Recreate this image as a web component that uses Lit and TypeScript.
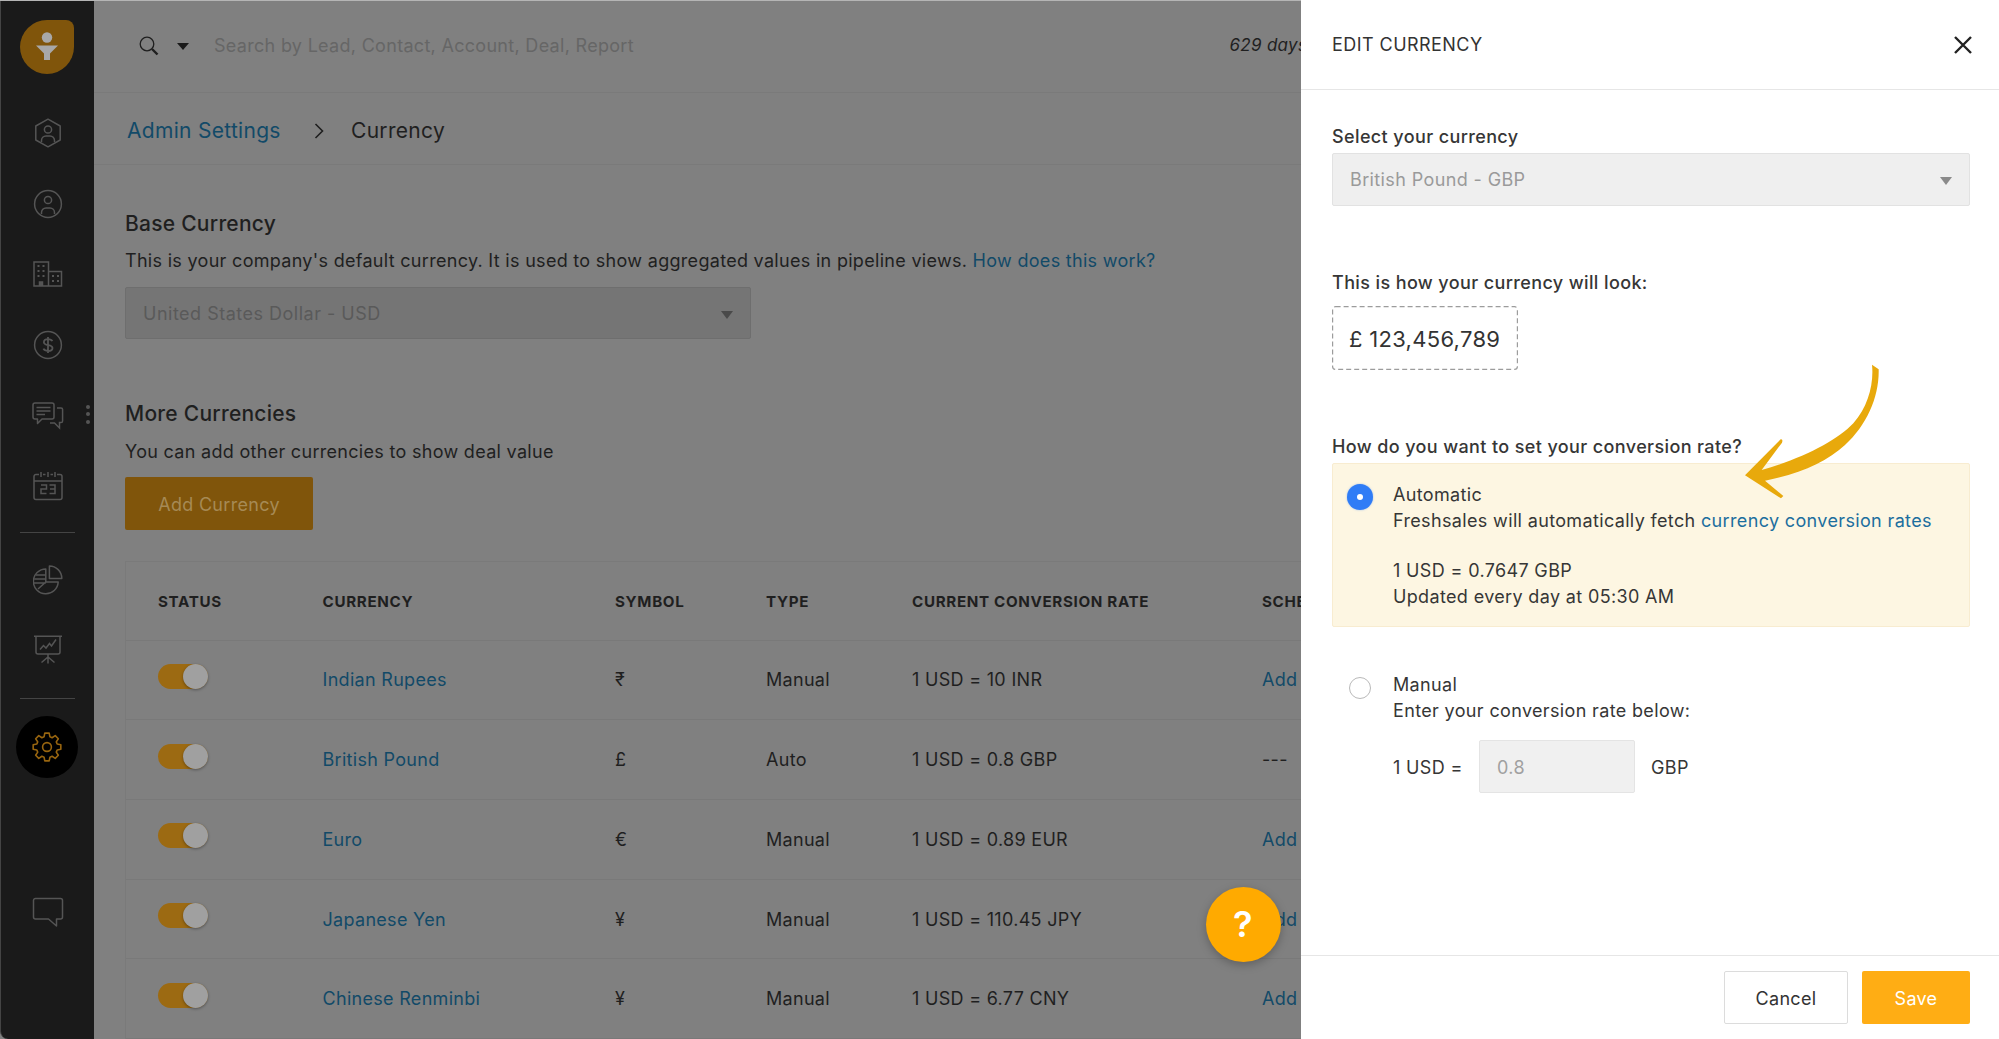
import { LitElement, html, css, svg } from "lit";
import { customElement } from "lit/decorators.js";

function gearPath(cx: number, cy: number): string {
  const teeth = 8, ro = 14, ri = 10.6;
  let d = "";
  for (let i = 0; i < teeth; i++) {
    const a = (i / teeth) * Math.PI * 2 - Math.PI / 2;
    const step = (Math.PI * 2) / teeth;
    const pts: [number, number][] = [
      [ri, a - step * 0.36],
      [ro, a - step * 0.2],
      [ro, a + step * 0.2],
      [ri, a + step * 0.36],
    ];
    for (const [r, t] of pts) {
      const x = (cx + r * Math.cos(t)).toFixed(2);
      const y = (cy + r * Math.sin(t)).toFixed(2);
      d += (d ? "L" : "M") + x + " " + y + " ";
    }
  }
  return d + "Z";
}

const personParts = (cx: number, cy: number, bottom: number) => svg`
  <circle cx=${cx} cy=${cy} r="3.6"></circle>
  <path d="M${cx - 6.5} ${bottom} v-1.5 a4.5 4.5 0 0 1 4.5 -4.5 h4 a4.5 4.5 0 0 1 4.5 4.5 v1.5"></path>`;

const icons = {
  hex: html`<svg class="ico" width="28" height="30" viewBox="0 0 28 30">
    <path d="M14 1.2 L26.2 8 V22 L14 28.8 L1.8 22 V8 Z" stroke-linejoin="round"></path>
    ${personParts(14, 11.5, 24)}
  </svg>`,
  person: html`<svg class="ico" width="30" height="30" viewBox="0 0 30 30">
    <circle cx="15" cy="15" r="13.4"></circle>
    ${personParts(15, 11, 25)}
  </svg>`,
  building: html`<svg class="ico" width="30" height="26" viewBox="0 0 30 26">
    <path d="M1 25 V1 H15.5 V25 Z M15.5 10.5 H28.5 V25 H15.5"></path>
    <path d="M4.5 5 h2 M9.5 5 h2 M4.5 10 h2 M9.5 10 h2 M4.5 15 h2 M9.5 15 h2 M19 15 h2 M24 15 h2 M19 20 h2 M24 20 h2" stroke-width="2"></path>
    <path d="M6.5 25 v-4 h3 v4" fill="#555"></path>
  </svg>`,
  dollar: html`<svg class="ico" width="30" height="30" viewBox="0 0 30 30">
    <circle cx="15" cy="15" r="13.4"></circle>
    <path d="M19.4 11.2 C18.6 9.6 17 9.2 15 9.2 C12.6 9.2 10.9 10.4 10.9 12.2 C10.9 16.4 19.5 13.8 19.5 18 C19.5 19.9 17.6 21 15 21 C12.9 21 11.2 20.3 10.4 18.7 M15 7 V23" stroke-width="1.8"></path>
  </svg>`,
  chat: html`<svg class="ico" width="32" height="28" viewBox="0 0 32 28">
    <path d="M3 1 H20 A2 2 0 0 1 22 3 V15 A2 2 0 0 1 20 17 H10 L5.5 21.5 V17 H3 A2 2 0 0 1 1 15 V3 A2 2 0 0 1 3 1 Z" stroke-linejoin="round"></path>
    <path d="M4.5 5.5 H18.5 M4.5 9 H18.5 M4.5 12.5 H13"></path>
    <path d="M25 6 H29 A1.6 1.6 0 0 1 30.6 7.6 V19 A1.6 1.6 0 0 1 29 20.6 H27.5 V26 L22.5 21 H18"></path>
  </svg>`,
  calendar: html`<svg class="ico" width="30" height="30" viewBox="0 0 30 30">
    <path d="M6 3.5 H3 A2 2 0 0 0 1 5.5 V26.5 A2 2 0 0 0 3 28.5 H27 A2 2 0 0 0 29 26.5 V5.5 A2 2 0 0 0 27 3.5 H24 M10 3.5 H12.5 M17.5 3.5 H20 M1 10 H29"></path>
    <path d="M8 1 V6 M15 1 V6 M22 1 V6"></path>
    <path d="M8 14 h5.5 v4 h-5.5 v4.5 h5.5 M16.5 14 h5.5 v8.5 h-5.5 M17 18 h5"></path>
  </svg>`,
  pie: html`<svg class="ico" width="30" height="30" viewBox="0 0 30 30">
    <path d="M12.8 4 A12.4 12.4 0 1 0 25.2 17 H12.8 Z" stroke-linejoin="round"></path>
    <path d="M16.4 1 A12.4 12.4 0 0 1 28.8 13.4 H16.4 Z" stroke-linejoin="round"></path>
    <path d="M3 10 H12.8 M1.2 14 H12.8 M1 18 H12.8 M12.8 17 L5 24"></path>
  </svg>`,
  board: html`<svg class="ico" width="30" height="30" viewBox="0 0 30 30">
    <path d="M1 1.2 H29 M3 1.2 V17 A2 2 0 0 0 5 19 H25 A2 2 0 0 0 27 17 V1.2"></path>
    <path d="M7 14.5 L10.5 10.5 L13 13 L16.5 8.5 L18.5 11 L23 4.5"></path>
    <path d="M15 19 V28.5 M8.5 27.5 L15 22 L21.5 27.5"></path>
  </svg>`,
  bubble: html`<svg class="ico bubble" width="32" height="32" viewBox="0 0 32 32">
    <path d="M3.5 1.5 H28.5 A2 2 0 0 1 30.5 3.5 V20 A2 2 0 0 1 28.5 22 H24.5 V29 L16.5 22 H3.5 A2 2 0 0 1 1.5 20 V3.5 A2 2 0 0 1 3.5 1.5 Z" stroke-linejoin="round"></path>
  </svg>`,
  gear: html`<svg class="gear" width="30" height="30" viewBox="0 0 30 30">
    <path d=${gearPath(15, 15)} stroke-linejoin="round"></path>
    <circle cx="15" cy="15" r="4.4"></circle>
  </svg>`,
};

const rows = [
  ["Indian Rupees", "₹", "Manual", "1 USD = 10 INR", true],
  ["British Pound", "£", "Auto", "1 USD = 0.8 GBP", false],
  ["Euro", "€", "Manual", "1 USD = 0.89 EUR", true],
  ["Japanese Yen", "¥", "Manual", "1 USD = 110.45 JPY", true],
  ["Chinese Renminbi", "¥", "Manual", "1 USD = 6.77 CNY", true],
] as const;

@customElement("app-root")
export class AppRoot extends LitElement {
  static styles = css`
    :host {
      display: block;
      position: relative;
      width: 1999px;
      height: 1039px;
      overflow: hidden;
      background: #808080;
      font-family: Inter, "Liberation Sans", sans-serif;
      font-size: 18px;
      letter-spacing: 0.3px;
      color: #1f1f1f;
    }
    .shell { display: flex; height: 1039px; }
    .side {
      width: 94px;
      flex: none;
      box-sizing: border-box;
      background: #1a1a1a;
      border-left: 1px solid #444;
      border-bottom-left-radius: 8px;
      padding-top: 20px;
      display: flex;
      flex-direction: column;
      align-items: center;
      position: relative;
    }
    .logo {
      width: 54px;
      height: 54px;
      background: #80550b;
      border-radius: 50% 8px 50% 50%;
      margin-bottom: 24px;
      margin-right: 1px;
      display: flex;
      align-items: center;
      justify-content: center;
    }
    .slot {
      height: 70.6px;
      display: flex;
      align-items: center;
      justify-content: center;
      position: relative;
      width: 100%;
    }
    .ico { fill: none; stroke: #555; stroke-width: 1.5; }
    .sep { width: 55px; height: 1px; background: #444; margin-top: 12px; margin-bottom: 12px; flex: none; }
    .sep.first { margin-top: 10px; }
    .gearwrap {
      width: 62px;
      height: 62px;
      border-radius: 50%;
      background: #000;
      margin-top: 5px;
      margin-right: 2px;
      display: flex;
      align-items: center;
      justify-content: center;
      flex: none;
    }
    .gear { fill: none; stroke: #98650f; stroke-width: 1.6; }
    .bubbleslot { margin-top: auto; margin-bottom: 91px; }
    .kebab {
      position: absolute;
      left: 85px;
      top: 50%;
      margin-top: -11px;
      display: flex;
      flex-direction: column;
      gap: 3.5px;
    }
    .kebab i { width: 4px; height: 4px; border-radius: 50%; background: #555; display: block; }

    .main { flex: 1; min-width: 0; overflow: hidden; }
    .top {
      height: 93px;
      box-sizing: border-box;
      border-bottom: 1px solid #7a7a7a;
      display: flex;
      align-items: center;
      padding-left: 45px;
    }
    .caret {
      width: 0; height: 0;
      border-left: 6px solid transparent;
      border-right: 6px solid transparent;
      border-top: 7px solid #1a1a1a;
      margin-left: 18px;
      margin-right: 25px;
    }
    .search { fill: none; stroke: #1f1f1f; stroke-width: 1.3; }
    .ph { color: #666; flex: none; width: 1015.5px; margin-bottom: 2px; }
    .days { font-style: italic; font-size: 17px; color: #1f1f1f; white-space: nowrap; margin-bottom: 3px; }
    .crumb {
      height: 72px;
      box-sizing: border-box;
      border-bottom: 1px solid #7a7a7a;
      display: flex;
      align-items: center;
      padding-left: 33px;
      padding-top: 3px;
      font-size: 21px;
    }
    .crumb a { color: #124a68; width: 152px; flex: none; white-space: nowrap; }
    .crumb svg { fill: none; stroke: #1f1f1f; stroke-width: 1.6; margin: 2px 27px 0 35px; }
    .content { padding: 46px 0 0 31px; }
    h2 { font-size: 21px; font-weight: 500; margin: 0; line-height: 26px; color: #1f1f1f; letter-spacing: 0.25px; }
    .desc { line-height: 24px; margin-top: 12px; white-space: nowrap; }
    .desc a { color: #124a68; }
    .sel {
      width: 626px;
      height: 52px;
      box-sizing: border-box;
      background: #757575;
      border: 1px solid #6e6e6e;
      border-radius: 2px;
      margin-top: 14px;
      display: flex;
      align-items: center;
      justify-content: space-between;
      padding: 0 17px;
      color: #5a5a5a;
      letter-spacing: 0.5px;
    }
    .tri {
      width: 0; height: 0;
      border-left: 6px solid transparent;
      border-right: 6px solid transparent;
      border-top: 8px solid #4a4a4a;
      margin-top: 3px;
    }
    .more { margin-top: 62px; }
    .desc.tight { margin-top: 13px; }
    .add {
      width: 188px;
      height: 53px;
      box-sizing: border-box;
      padding-top: 2px;
      background: #80550b;
      border-radius: 2px;
      margin-top: 13px;
      display: flex;
      align-items: center;
      justify-content: center;
      color: #a68a55;
    }
    .table {
      margin-top: 31px;
      border-left: 1px solid #7a7a7a;
      border-top: 1px solid #7a7a7a;
      width: 1300px;
    }
    .row {
      display: grid;
      grid-template-columns: 164.5px 292.5px 151px 146px 350px 1fr;
      align-items: center;
      padding-left: 32px;
      height: 79.7px;
      box-sizing: border-box;
      border-bottom: 1px solid #797979;
    }
    .row.head { height: 78.6px; padding-top: 1px; font-size: 15.2px; font-weight: 700; letter-spacing: 0.65px; color: #1f1f1f; }
    .row a { color: #124a68; }
    .toggle {
      width: 50px;
      height: 25px;
      border-radius: 13px;
      background: #9c6a12;
      margin-bottom: 7px;
      display: flex;
      justify-content: flex-end;
    }
    .knob {
      width: 25px;
      height: 25px;
      border-radius: 50%;
      background: #a0a0a0;
      box-shadow: 0 1px 3px rgba(0,0,0,.35);
    }

    .panel {
      position: absolute;
      top: 0; bottom: 0; right: 0;
      width: 698px;
      background: #fff;
      display: flex;
      flex-direction: column;
      color: #363636;
    }
    .p-head {
      height: 90px;
      box-sizing: border-box;
      border-bottom: 1px solid #e6e6e6;
      display: flex;
      align-items: center;
      justify-content: space-between;
      padding: 0 27px 0 31px;
      flex: none;
    }
    .p-title { color: #333; letter-spacing: 0.45px; }
    .close { stroke: #222; stroke-width: 2.4; fill: none; }
    .p-body { flex: 1; padding: 35px 29px 0 31px; }
    .lbl { line-height: 24px; font-weight: 500; letter-spacing: 0.38px; }
    .psel {
      height: 53px;
      box-sizing: border-box;
      background: #efefef;
      border: 1px solid #e2e2e2;
      border-radius: 2px;
      margin-top: 4px;
      display: flex;
      align-items: center;
      justify-content: space-between;
      padding: 0 17px;
      color: #9a9a9a;
      letter-spacing: 0.38px;
    }
    .psel .tri { border-top-color: #8a8a8a; }
    .gap65 { margin-top: 65px; }
    .dash {
      width: 186px;
      height: 64px;
      box-sizing: border-box;
      padding-top: 1px;
      border-radius: 3px;
      margin-top: 11px;
      display: flex;
      align-items: center;
      padding-left: 17px;
      font-size: 22px;
      color: #333;
      position: relative;
    }
    .dash svg { position: absolute; left: 0; top: 0; fill: none; stroke: #9c9c9c; stroke-width: 1.2; stroke-dasharray: 5 3; }
    .opt {
      display: flex;
      box-sizing: border-box;
      padding: 18px 0 0 14px;
      line-height: 26px;
      letter-spacing: 0.35px;
    }
    .opt.auto {
      background: #fdf6e2;
      border: 1px solid #f8ecd0;
      border-radius: 2px;
      height: 164px;
      margin-top: 4px;
    }
    .radcol { width: 46px; flex: none; }
    .rad-on {
      width: 26px; height: 26px;
      margin-top: 2px;
      box-sizing: border-box;
      border-radius: 50%;
      background: #2f7cf6;
      display: flex;
      align-items: center;
      justify-content: center;
      box-shadow: 0 0 2px rgba(47,124,246,.5);
    }
    .rad-on i { width: 6px; height: 6px; border-radius: 50%; background: #fff; display: block; }
    .rad-off {
      width: 22px; height: 22px;
      margin: 5px 0 0 2px;
      box-sizing: border-box;
      border-radius: 50%;
      background: #fff;
      border: 1px solid #b9b9b9;
    }
    .opt a { color: #1c6e9e; }
    .spacer { height: 24px; }
    .opt.manual { padding: 0 0 0 15px; margin-top: 45px; }
    .rate { display: flex; align-items: center; margin-top: 16px; }
    .rate .l { width: 86px; flex: none; padding-top: 3px; }
    .rate .g { padding-top: 3px; }
    .inp {
      width: 156px;
      height: 53px;
      box-sizing: border-box;
      padding-top: 2px;
      background: #f0f0f0;
      border: 1px solid #e4e4e4;
      border-radius: 2px;
      display: flex;
      align-items: center;
      padding-left: 17px;
      color: #a0a0a0;
      margin-right: 16px;
    }
    .p-foot {
      height: 84px;
      box-sizing: border-box;
      border-top: 1px solid #e6e6e6;
      display: flex;
      justify-content: flex-end;
      gap: 14px;
      padding: 15px 29px 0 0;
      flex: none;
    }
    .btn {
      height: 53px;
      box-sizing: border-box;
      border-radius: 2px;
      display: flex;
      align-items: center;
      justify-content: center;
      padding-top: 2px;
    }
    .cancel { width: 124px; border: 1px solid #dcdcdc; background: #fff; color: #333; }
    .save { width: 108px; background: #ffad14; color: #fff; }
    .arrow { position: absolute; left: 419px; top: 350px; }
    .help {
      position: absolute;
      left: 1205.5px;
      top: 887px;
      width: 75px;
      height: 75px;
      box-sizing: border-box;
      padding-bottom: 2px;
      border-radius: 50%;
      background: #ffaa00;
      color: #fff;
      font-size: 36px;
      font-weight: 600;
      display: flex;
      align-items: center;
      justify-content: center;
      box-shadow: 0 3px 10px rgba(0,0,0,.25);
    }
    .edge { position: absolute; left: 0; right: 0; top: 0; height: 1px; background: #b5b5b5; }
  `;

  render() {
    return html`
      <div class="shell">
        <aside class="side">
          <div class="logo">
            <svg width="24" height="30" viewBox="0 0 24 30">
              <circle cx="12" cy="5.5" r="5.2" fill="#a8a8a8"></circle>
              <path d="M1 13.5 H23 L15 21.5 V28 H9 V21.5 Z" fill="#a8a8a8"></path>
            </svg>
          </div>
          <div class="slot">${icons.hex}</div>
          <div class="slot">${icons.person}</div>
          <div class="slot">${icons.building}</div>
          <div class="slot">${icons.dollar}</div>
          <div class="slot">${icons.chat}<div class="kebab"><i></i><i></i><i></i></div></div>
          <div class="slot">${icons.calendar}</div>
          <div class="sep first"></div>
          <div class="slot">${icons.pie}</div>
          <div class="slot">${icons.board}</div>
          <div class="sep"></div>
          <div class="gearwrap">${icons.gear}</div>
          <div class="slot bubbleslot">${icons.bubble}</div>
        </aside>
        <main class="main">
          <div class="top">
            <svg class="search" width="20" height="20" viewBox="0 0 20 20">
              <circle cx="8" cy="8" r="6.8"></circle>
              <path d="M13 13 L18.5 18.5" stroke-width="2.4"></path>
            </svg>
            <span class="caret"></span>
            <span class="ph">Search by Lead, Contact, Account, Deal, Report</span>
            <span class="days">629 days</span>
          </div>
          <div class="crumb">
            <a>Admin Settings</a>
            <svg width="10" height="16" viewBox="0 0 10 16"><path d="M1.5 1 L8.5 8 L1.5 15"></path></svg>
            <span>Currency</span>
          </div>
          <div class="content">
            <h2>Base Currency</h2>
            <div class="desc">This is your company's default currency. It is used to show aggregated values in pipeline views. <a>How does this work?</a></div>
            <div class="sel"><span>United States Dollar - USD</span><span class="tri"></span></div>
            <h2 class="more">More Currencies</h2>
            <div class="desc tight">You can add other currencies to show deal value</div>
            <div class="add">Add Currency</div>
            <div class="table">
              <div class="row head">
                <span>STATUS</span><span>CURRENCY</span><span>SYMBOL</span><span>TYPE</span><span>CURRENT CONVERSION RATE</span><span>SCHEDULE</span>
              </div>
              ${rows.map(
                (r) => html`<div class="row">
                  <span class="toggle"><span class="knob"></span></span>
                  <a>${r[0]}</a><span>${r[1]}</span><span>${r[2]}</span><span>${r[3]}</span>
                  ${r[4] ? html`<a>Add</a>` : html`<span>---</span>`}
                </div>`
              )}
            </div>
          </div>
        </main>
      </div>
      <div class="edge"></div>
      <div class="help">?</div>
      <section class="panel">
        <div class="p-head">
          <span class="p-title">EDIT CURRENCY</span>
          <svg class="close" width="18" height="18" viewBox="0 0 18 18"><path d="M1 1 L17 17 M17 1 L1 17"></path></svg>
        </div>
        <div class="p-body">
          <div class="lbl">Select your currency</div>
          <div class="psel"><span>British Pound - GBP</span><span class="tri"></span></div>
          <div class="lbl gap65">This is how your currency will look:</div>
          <div class="dash">
            <svg width="186" height="64" viewBox="0 0 186 64"><rect x="0.6" y="0.6" width="184.8" height="62.8" rx="3"></rect></svg>
            <span>£ 123,456,789</span>
          </div>
          <div class="lbl gap65">How do you want to set your conversion rate?</div>
          <div class="opt auto">
            <div class="radcol"><div class="rad-on"><i></i></div></div>
            <div>
              <div>Automatic</div>
              <div>Freshsales will automatically fetch <a>currency conversion rates</a></div>
              <div class="spacer"></div>
              <div>1 USD = 0.7647 GBP</div>
              <div>Updated every day at 05:30 AM</div>
            </div>
          </div>
          <div class="opt manual">
            <div class="radcol"><div class="rad-off"></div></div>
            <div>
              <div>Manual</div>
              <div>Enter your conversion rate below:</div>
              <div class="rate"><span class="l">1 USD =</span><span class="inp">0.8</span><span class="g">GBP</span></div>
            </div>
          </div>
        </div>
        <div class="p-foot">
          <div class="btn cancel">Cancel</div>
          <div class="btn save">Save</div>
        </div>
        <svg class="arrow" width="180" height="160" viewBox="0 0 540 480">
          <path fill="#e8a90c" d="M456 44 C462 100 445 170 400 220 C350 272 250 325 125 360 L186 278 Q190 268 182 268 L75 376 L183 445 L190 438 L135 392 C240 372 320 335 375 285 C440 225 478 140 476 58 Z"></path>
        </svg>
      </section>
    `;
  }
}
